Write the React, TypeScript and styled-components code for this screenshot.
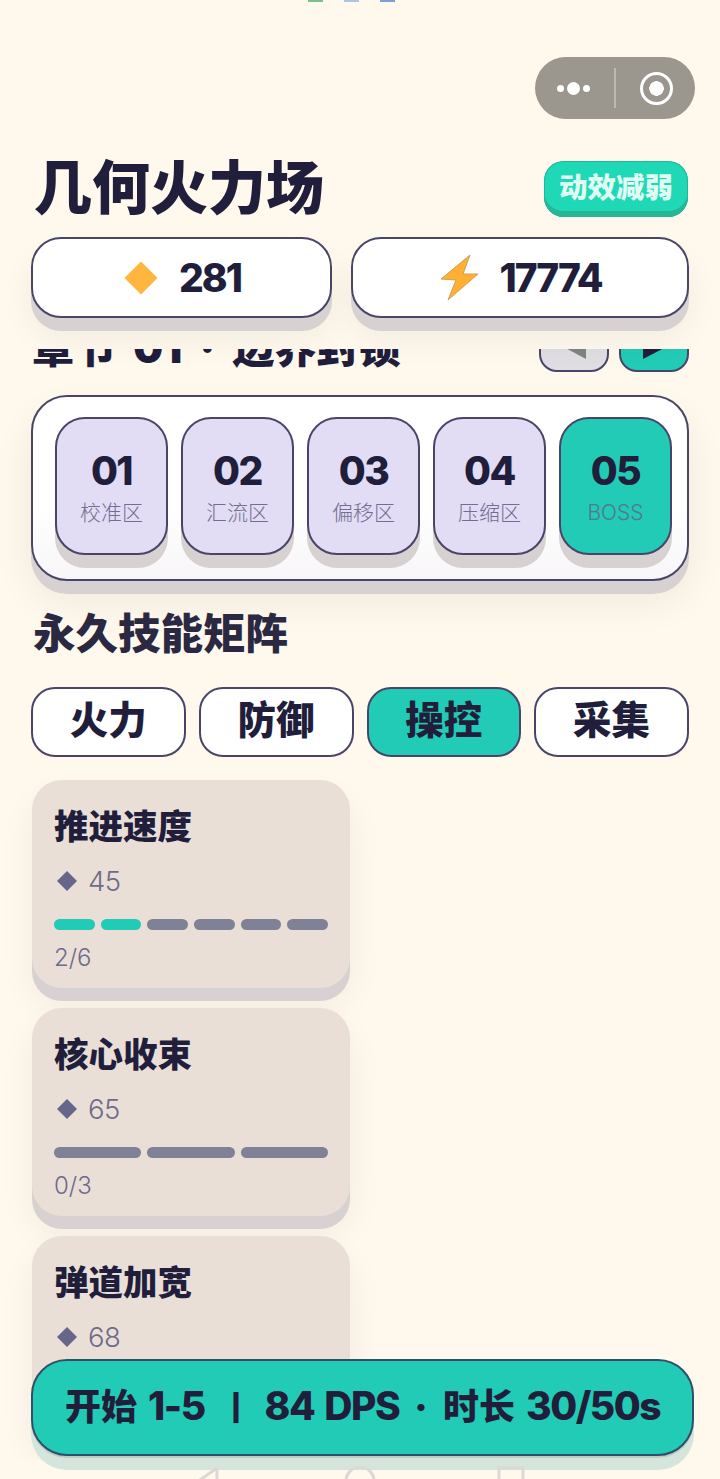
import styled, { createGlobalStyle } from 'styled-components'

const ink = '#211e3c'
const line = '#4a4568'
const teal = '#22cbb5'
const lift = '#d8d1d2'
const sans = `Inter, 'Noto Sans CJK SC', sans-serif`

interface Skill {
  name: string
  cost: number
  level: number
  max: number
}

const stages = [
  { no: '01', label: '校准区' },
  { no: '02', label: '汇流区' },
  { no: '03', label: '偏移区' },
  { no: '04', label: '压缩区' },
  { no: '05', label: 'BOSS', boss: true },
]

const tabs = ['火力', '防御', '操控', '采集']

const skills: Skill[] = [
  { name: '推进速度', cost: 45, level: 2, max: 6 },
  { name: '核心收束', cost: 65, level: 0, max: 3 },
  { name: '弹道加宽', cost: 68, level: 0, max: 3 },
]

export default function App() {
  return (
    <Page>
      <GlobalStyle />
      <StatusMarks>
        <StatusMark $color="#7cc08c" />
        <StatusMark $color="#aac4e2" />
        <StatusMark $color="#7f9fd2" />
      </StatusMarks>

      <Capsule>
        <Dots>
          <Dot $size={7} />
          <Dot $size={13} />
          <Dot $size={7} />
        </Dots>
        <CapsuleLine />
        <Ring />
      </Capsule>

      <Header>
        <Title>几何火力场</Title>
        <MotionBadge>动效减弱</MotionBadge>
      </Header>

      <Stats>
        <StatPill $width={301} $gap={21}>
          <svg width="34" height="34" viewBox="0 0 34 34">
            <path d="M17 0.5 33.5 17 17 33.5 0.5 17Z" fill="#ffb63e" />
          </svg>
          <StatValue>281</StatValue>
        </StatPill>
        <StatPill $width={338} $gap={19}>
          <svg width="40" height="48" viewBox="0 0 40 48">
            <path
              d="M30 1 1 25l15 1-8 20 30-26-15 0z"
              fill="#ffb033"
              stroke="#c9a35c"
              strokeWidth="1"
              strokeLinejoin="round"
            />
          </svg>
          <StatValue>17774</StatValue>
        </StatPill>
      </Stats>

      <Scroller>
        <ScrollContent>
          <ChapterRow>
            <ChapterTitle>章节 01 · 边界封锁</ChapterTitle>
            <ArrowGroup>
              <ArrowButton $on={false}>
                <svg width="28" height="30" viewBox="0 0 28 30">
                  <path d="M26 30 0 16 26 0z" fill="#7c857f" />
                </svg>
              </ArrowButton>
              <ArrowButton $on>
                <svg width="28" height="30" viewBox="0 0 28 30">
                  <path d="M3 30 28 17 3 0z" fill={ink} />
                </svg>
              </ArrowButton>
            </ArrowGroup>
          </ChapterRow>

          <StagePanel>
            {stages.map((s) => (
              <StageTile key={s.no} $boss={!!s.boss}>
                <StageNo>{s.no}</StageNo>
                <StageLabel $boss={!!s.boss}>{s.label}</StageLabel>
              </StageTile>
            ))}
          </StagePanel>

          <SectionTitle>永久技能矩阵</SectionTitle>

          <TabRow>
            {tabs.map((t) => (
              <Tab key={t} $active={t === '操控'}>
                {t}
              </Tab>
            ))}
          </TabRow>

          <SkillList>
            {skills.map((s) => (
              <SkillCard key={s.name}>
                <SkillName>{s.name}</SkillName>
                <CostRow>
                  <svg width="20" height="20" viewBox="0 0 20 20">
                    <path d="M10 0 20 10 10 20 0 10Z" fill="#65668a" />
                  </svg>
                  <span>{s.cost}</span>
                </CostRow>
                <Segments>
                  {Array.from({ length: s.max }, (_, i) => (
                    <Segment key={i} $filled={i < s.level} />
                  ))}
                </Segments>
                <LevelText>
                  {s.level}/{s.max}
                </LevelText>
              </SkillCard>
            ))}
          </SkillList>
        </ScrollContent>
      </Scroller>

      <StartButton>
        开始 <Num>1-5</Num> <Bar>|</Bar> <Num>84 DPS</Num> <Sep>·</Sep> 时长 <Num>30/50s</Num>
      </StartButton>

      <NavIcons>
        <svg width="40" height="14" viewBox="0 0 40 14">
          <path d="M27 3 3 20M27 3v17" fill="none" stroke="#dcd8d3" strokeWidth="3" />
        </svg>
        <svg width="32" height="14" viewBox="0 0 32 14">
          <circle cx="16" cy="16" r="14" fill="none" stroke="#dcd8d3" strokeWidth="3" />
        </svg>
        <svg width="28" height="14" viewBox="0 0 28 14">
          <path d="M2 18V3h24v15" fill="none" stroke="#dcd8d3" strokeWidth="3" />
        </svg>
      </NavIcons>
    </Page>
  )
}

const GlobalStyle = createGlobalStyle`
  html, body {
    margin: 0;
    padding: 0;
    background: #fff8ec;
  }
`

const Page = styled.div`
  position: relative;
  width: 720px;
  height: 1479px;
  overflow: hidden;
  display: flex;
  flex-direction: column;
  background: #fff8ec;
  font-family: ${sans};
  color: ${ink};
`

const StatusMarks = styled.div`
  position: absolute;
  top: 0;
  left: 308px;
  display: flex;
  gap: 21px;
`

const StatusMark = styled.i<{ $color: string }>`
  display: block;
  width: 15px;
  height: 2px;
  background: ${(p) => p.$color};
`

const Capsule = styled.div`
  margin: 57px 0 0 535px;
  width: 160px;
  height: 62px;
  box-sizing: border-box;
  border-radius: 31px;
  background: #9b968e;
  display: flex;
  align-items: center;
  padding: 0 22px;
`

const Dots = styled.div`
  display: flex;
  align-items: center;
  gap: 3px;
  width: 58px;
`

const Dot = styled.i<{ $size: number }>`
  display: block;
  width: ${(p) => p.$size}px;
  height: ${(p) => p.$size}px;
  border-radius: 50%;
  background: #fff;
`

const CapsuleLine = styled.i`
  display: block;
  width: 2px;
  height: 40px;
  background: #bdb9b1;
  margin-right: 24px;
`

const Ring = styled.i`
  display: block;
  flex: none;
  box-sizing: border-box;
  width: 33px;
  height: 33px;
  border: 3px solid #fff;
  border-radius: 50%;
  background: radial-gradient(circle, #fff 0 7px, transparent 7.5px);
`

const Header = styled.header`
  display: flex;
  align-items: center;
  justify-content: space-between;
  margin-top: 42px;
  padding: 0 32px 0 34px;
  height: 56px;
`

const Title = styled.h1`
  margin: 0;
  padding-bottom: 2px;
  font-size: 58px;
  line-height: 56px;
  font-weight: 900;
  color: ${ink};
`

const MotionBadge = styled.div`
  box-sizing: border-box;
  width: 144px;
  height: 56px;
  padding-bottom: 7px;
  border-radius: 20px;
  background: #1fd8b5;
  box-shadow: inset 0 -6px 0 #27b598, inset 0 0 0 1px #27b598;
  color: #e0fdf3;
  font-size: 28.5px;
  font-weight: 900;
  display: flex;
  align-items: center;
  justify-content: center;
`

const Stats = styled.div`
  position: relative;
  z-index: 2;
  display: flex;
  gap: 19px;
  margin-top: 20px;
  padding: 0 31px;
`

const StatPill = styled.div<{ $width: number; $gap: number }>`
  box-sizing: border-box;
  width: ${(p) => p.$width}px;
  height: 81px;
  padding-left: 2px;
  border: 2px solid ${line};
  border-radius: 30px;
  background: #fff;
  box-shadow: 0 13px 0 ${lift}, 0 20px 34px rgba(33, 30, 60, 0.06);
  display: flex;
  align-items: center;
  justify-content: center;
  gap: ${(p) => p.$gap}px;
`

const StatValue = styled.span`
  font-size: 39px;
  font-weight: 800;
  line-height: 1;
  letter-spacing: -2px;
`

const Scroller = styled.div`
  height: 1111px;
  margin-top: 31px;
  overflow: hidden;
  flex: none;
`

const ScrollContent = styled.div`
  margin-top: -19px;
  padding: 0 31px;
`

const ChapterRow = styled.div`
  display: flex;
  align-items: flex-start;
  justify-content: space-between;
  height: 42px;
`

const ChapterTitle = styled.h2`
  margin: 0 0 0 1px;
  font-size: 42px;
  line-height: 36px;
  font-weight: 900;
  word-spacing: 9px;
  white-space: nowrap;
`

const ArrowGroup = styled.div`
  display: flex;
  gap: 10px;
`

const ArrowButton = styled.div<{ $on: boolean }>`
  box-sizing: border-box;
  width: 70px;
  height: 42px;
  border: 2px solid ${line};
  border-radius: 18px;
  background: ${(p) => (p.$on ? teal : '#dfdce2')};
  display: flex;
  align-items: flex-end;
  justify-content: center;
  padding-bottom: 11px;
  overflow: hidden;
`

const StagePanel = styled.div`
  box-sizing: border-box;
  display: flex;
  gap: 13px;
  height: 186px;
  margin-top: 23px;
  padding: 20px 15px 0 22px;
  border: 2px solid ${line};
  border-radius: 36px;
  background: linear-gradient(180deg, #fff 60%, #f8f6f8 100%);
  box-shadow: 0 13px 0 ${lift}, 0 20px 40px rgba(33, 30, 60, 0.07);
`

const StageTile = styled.div<{ $boss: boolean }>`
  box-sizing: border-box;
  flex: 1;
  height: 138px;
  border: 2px solid ${line};
  border-radius: 30px;
  background: ${(p) => (p.$boss ? teal : '#e2dcf4')};
  box-shadow: 0 13px 0 ${lift};
  display: flex;
  flex-direction: column;
  align-items: center;
  padding-top: 30px;
`

const StageNo = styled.div`
  font-size: 39px;
  line-height: 44px;
  font-weight: 800;
  letter-spacing: -1.5px;
`

const StageLabel = styled.div<{ $boss: boolean }>`
  margin-top: 5px;
  font-size: 21px;
  line-height: 30px;
  font-weight: 300;
  color: ${(p) => (p.$boss ? '#4f7b8e' : '#736e90')};
`

const SectionTitle = styled.h2`
  margin: 26px 0 0 2px;
  font-size: 42.5px;
  line-height: 54px;
  font-weight: 900;
  color: #2b2842;
`

const TabRow = styled.div`
  display: flex;
  gap: 13px;
  margin-top: 26px;
`

const Tab = styled.div<{ $active: boolean }>`
  box-sizing: border-box;
  flex: 1;
  height: 70px;
  padding-bottom: 10px;
  border: 2px solid ${line};
  border-radius: 24px;
  background: ${(p) => (p.$active ? teal : '#fff')};
  font-size: 38.5px;
  font-weight: 900;
  display: flex;
  align-items: center;
  justify-content: center;
`

const SkillList = styled.div`
  display: flex;
  flex-direction: column;
  gap: 20px;
  margin-top: 23px;
`

const SkillCard = styled.div`
  box-sizing: border-box;
  width: 318px;
  height: 208px;
  margin-left: 1px;
  padding: 25px 22px 0;
  border-radius: 30px;
  background: #e9dfd7;
  box-shadow: 0 13px 0 ${lift}, 0 18px 36px rgba(33, 30, 60, 0.06);
`

const SkillName = styled.div`
  font-size: 34.5px;
  line-height: 44px;
  font-weight: 900;
`

const CostRow = styled.div`
  display: flex;
  align-items: center;
  gap: 11px;
  margin: 15px 0 0 3px;
  height: 34px;
  font-size: 27.5px;
  font-weight: 300;
  letter-spacing: -0.5px;
  color: #6e6b8a;
`

const Segments = styled.div`
  display: flex;
  gap: 6px;
  margin-top: 21px;
`

const Segment = styled.i<{ $filled: boolean }>`
  display: block;
  flex: 1;
  height: 11px;
  border-radius: 6px;
  background: ${(p) => (p.$filled ? teal : '#7f8296')};
`

const LevelText = styled.div`
  margin-top: 11px;
  font-size: 24px;
  line-height: 34px;
  font-weight: 300;
  color: #6e6b8a;
`

const NavIcons = styled.div`
  position: absolute;
  left: 190px;
  bottom: 0;
  height: 14px;
  display: grid;
  grid-template-columns: 154px 153px 28px;
`

const StartButton = styled.button`
  position: absolute;
  left: 31px;
  top: 1359px;
  box-sizing: border-box;
  width: 663px;
  height: 97px;
  padding: 0 0 8px;
  border: 2px solid #2f5068;
  border-radius: 36px;
  background: ${teal};
  box-shadow: 0 2px 0 #bfcbc5, 0 14px 0 #d6e5dc;
  font-family: ${sans};
  font-size: 36px;
  font-weight: 900;
  word-spacing: 4px;
  color: ${ink};
  white-space: nowrap;
`

const Num = styled.span`
  font-size: 39px;
  font-weight: 800;
  letter-spacing: -1.5px;
  word-spacing: 3px;
`

const Bar = styled.span`
  font-size: 26px;
  font-weight: 900;
  vertical-align: 3px;
  margin: 0 12px 0 15px;
`

const Sep = styled.span`
  margin: 0 4px;
`
